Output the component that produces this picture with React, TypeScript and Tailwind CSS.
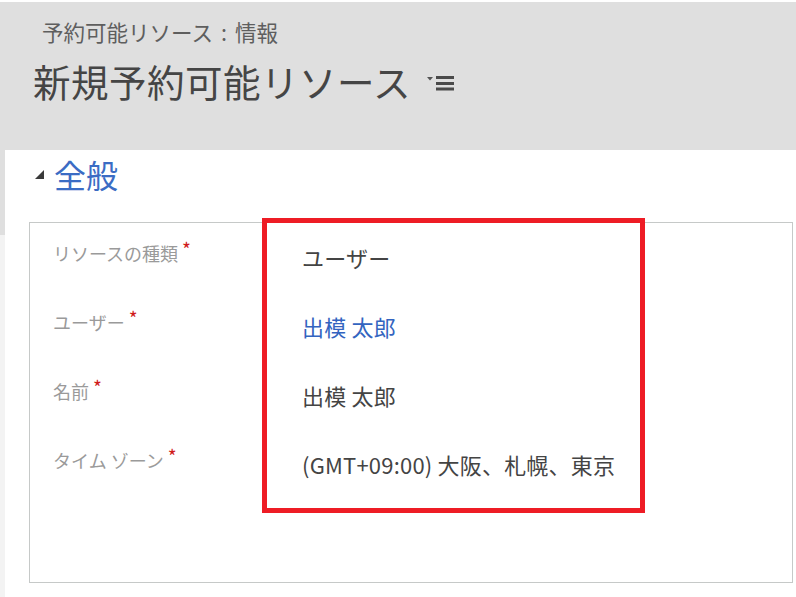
import type { ReactNode } from 'react'

// ── Field row ─────────────────────────────────────────────────────────────────

function FieldRow({ label, children }: { label: string; children: ReactNode }) {
  return (
    <div className="flex items-start h-[69px]">
      <div className="w-[249px] flex items-start text-[18px] leading-[24px] text-[#9a9a9a] whitespace-pre">
        <span>{label}</span>
        <span className="ml-[4px] text-[19px] leading-[16px] text-[#d01a1a]">*</span>
      </div>
      <div className="mt-[4px] text-[22px] leading-[24px] whitespace-pre tracking-[0.2px]">{children}</div>
    </div>
  )
}

function ListMenuIcon() {
  return (
    <svg width="28" height="18" viewBox="0 0 28 18" className="ml-[16px] mt-[16px]">
      <polygon points="0,2 6,2 3,5.5" fill="#555" />
      <rect x="9" y="1" width="18" height="3" fill="#4a4a4a" />
      <rect x="9" y="7" width="18" height="3" fill="#4a4a4a" />
      <rect x="9" y="12.5" width="18" height="3" fill="#4a4a4a" />
    </svg>
  )
}

// ── Main component ────────────────────────────────────────────────────────────

export default function App() {
  return (
    <div
      className="relative w-[796px] h-[597px] overflow-hidden bg-white flex flex-col"
      style={{ fontFamily: '"Noto Sans CJK JP", "Noto Sans", sans-serif' }}
    >
      {/* Header */}
      <header className="h-[150px] shrink-0 bg-[#dfdfdf] border-t-2 border-white pl-[33px] pt-[18px]">
        <div className="ml-[9px] flex text-[21.5px] leading-[24px] text-[#5e5e5e]">
          <span>予約可能リソース</span>
          <span className="mx-[8px]">:</span>
          <span>情報</span>
        </div>
        <div className="mt-[15px] flex items-start">
          <h1 className="text-[37.5px] leading-[44px] text-[#454545] tracking-[0.5px]">新規予約可能リソース</h1>
          <ListMenuIcon />
        </div>
      </header>

      <div className="flex flex-1">
        {/* left strip */}
        <div className="w-[5px] flex flex-col">
          <div className="h-[85px] bg-[#dfdfdf]" />
          <div className="flex-1 bg-[#f3f3f3]" />
        </div>

        <div className="flex-1 flex flex-col">
          {/* Section title */}
          <div className="mt-[6px] flex items-center h-[36px] pl-[30px]">
            <svg width="9" height="9" viewBox="0 0 9 9">
              <polygon points="9,0 9,9 0,9" fill="#3a3a3a" />
            </svg>
            <span className="ml-[10px] text-[32px] leading-[36px] text-[#3b6cc4]">全般</span>
          </div>

          {/* Form box */}
          <div className="mt-[30px] ml-[24px] mr-[3px] h-[361px] border border-[#c6c9c8] pt-[18px] pl-[23px]">
            <FieldRow label="リソースの種類">
              <span className="text-[#444]">ユーザー</span>
            </FieldRow>
            <FieldRow label="ユーザー">
              <span className="text-[#3364c0]">出模 太郎</span>
            </FieldRow>
            <FieldRow label="名前">
              <span className="text-[#444]">出模 太郎</span>
            </FieldRow>
            <FieldRow label="タイム ゾーン">
              <span className="text-[#444]">(GMT+09:00) 大阪、札幌、東京</span>
            </FieldRow>
          </div>
        </div>
      </div>

      {/* Highlight annotation */}
      <div className="absolute left-[262px] top-[218px] w-[383px] h-[295px] border-[5px] border-[#ee1c25]" />
    </div>
  )
}
